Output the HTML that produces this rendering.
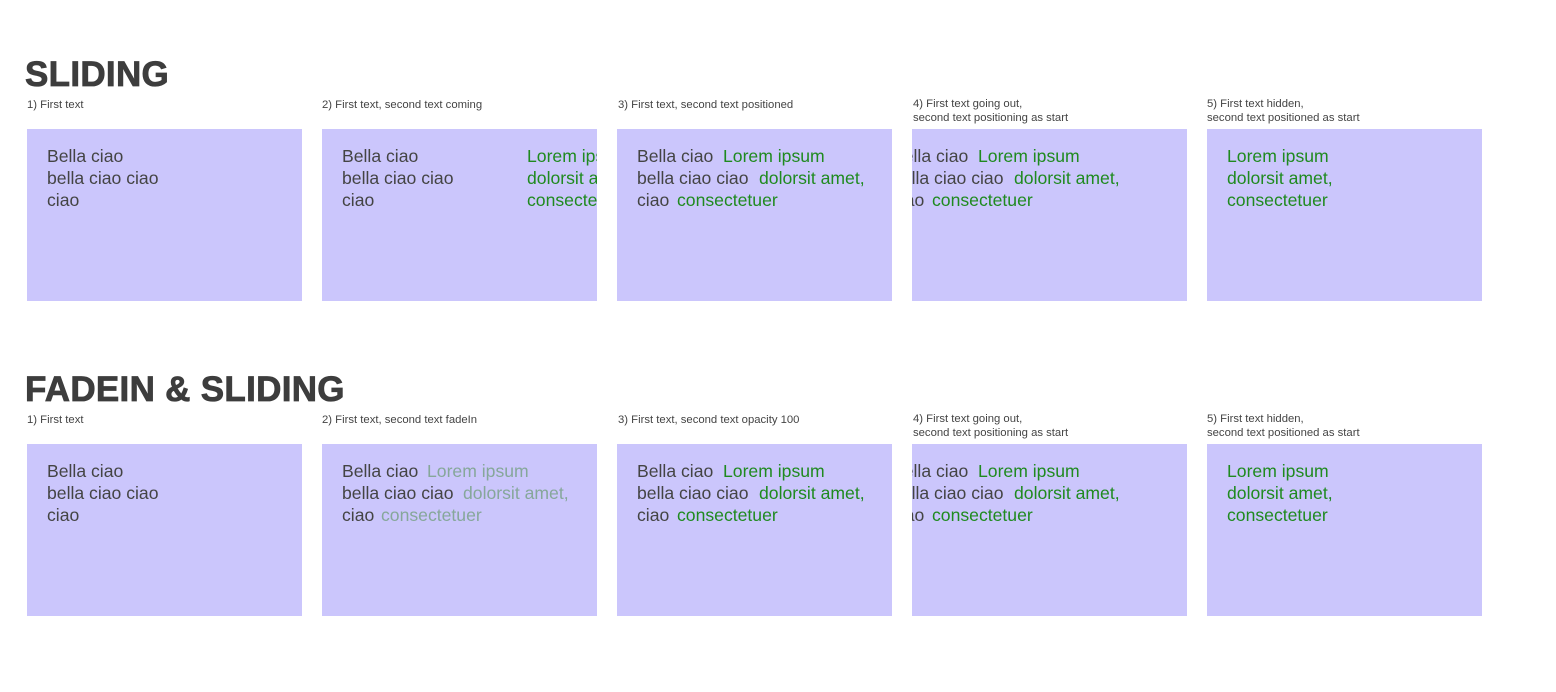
<!DOCTYPE html>
<html><head><meta charset="utf-8"><style>
body{margin:0;width:1556px;height:692px;background:#fff;position:relative;overflow:hidden;font-family:"Liberation Sans",sans-serif;color:#444}
h1{position:absolute;margin:0;font-size:35px;font-weight:bold;letter-spacing:0.3px;color:#3d3d3d;line-height:1;-webkit-text-stroke:0.8px #3d3d3d}
.lab{position:absolute;font-size:11.3px;line-height:14px;color:#444}
.box{position:absolute;width:275px;height:172px;background:#cbc6fc;overflow:hidden}
.t{position:absolute;font-size:17.6px;line-height:22px;white-space:nowrap;color:#444}
.g{color:#1f8a1f}
.f{color:#86a79a}
</style></head><body>
<h1 style="left:25px;top:57px">SLIDING</h1>
<h1 style="left:25px;top:372px">FADEIN &amp; SLIDING</h1>

<div class="lab" style="left:27px;top:98px">1) First text</div>
<div class="lab" style="left:322px;top:98px">2) First text, second text coming</div>
<div class="lab" style="left:618px;top:98px">3) First text, second text positioned</div>
<div class="lab" style="left:913px;top:97px">4) First text going out,<br>second text positioning as start</div>
<div class="lab" style="left:1207px;top:97px">5) First text hidden,<br>second text positioned as start</div>

<div class="lab" style="left:27px;top:413px">1) First text</div>
<div class="lab" style="left:322px;top:413px">2) First text, second text fadeIn</div>
<div class="lab" style="left:618px;top:413px">3) First text, second text opacity 100</div>
<div class="lab" style="left:913px;top:412px">4) First text going out,<br>second text positioning as start</div>
<div class="lab" style="left:1207px;top:412px">5) First text hidden,<br>second text positioned as start</div>

<div class="box" style="left:27px;top:129px">
<div class="t" style="left:20px;top:16px">Bella ciao</div>
<div class="t" style="left:20px;top:38px">bella ciao ciao</div>
<div class="t" style="left:20px;top:60px">ciao</div>
</div>
<div class="box" style="left:322px;top:129px">
<div class="t" style="left:20px;top:16px">Bella ciao</div>
<div class="t" style="left:20px;top:38px">bella ciao ciao</div>
<div class="t" style="left:20px;top:60px">ciao</div>
<div class="t g" style="left:205px;top:16px">Lorem ipsum</div>
<div class="t g" style="left:205px;top:38px">dolorsit amet,</div>
<div class="t g" style="left:205px;top:60px">consectetuer</div>
</div>
<div class="box" style="left:617px;top:129px">
<div class="t" style="left:20px;top:16px">Bella ciao</div>
<div class="t" style="left:20px;top:38px">bella ciao ciao</div>
<div class="t" style="left:20px;top:60px">ciao</div>
<div class="t g" style="left:106px;top:16px">Lorem ipsum</div>
<div class="t g" style="left:142px;top:38px">dolorsit amet,</div>
<div class="t g" style="left:60px;top:60px">consectetuer</div>
</div>
<div class="box" style="left:912px;top:129px">
<div class="t" style="left:-20px;top:16px">Bella ciao</div>
<div class="t" style="left:-20px;top:38px">bella ciao ciao</div>
<div class="t" style="left:-20px;top:60px">ciao</div>
<div class="t g" style="left:66px;top:16px">Lorem ipsum</div>
<div class="t g" style="left:102px;top:38px">dolorsit amet,</div>
<div class="t g" style="left:20px;top:60px">consectetuer</div>
</div>
<div class="box" style="left:1207px;top:129px">
<div class="t g" style="left:20px;top:16px">Lorem ipsum</div>
<div class="t g" style="left:20px;top:38px">dolorsit amet,</div>
<div class="t g" style="left:20px;top:60px">consectetuer</div>
</div>

<div class="box" style="left:27px;top:444px">
<div class="t" style="left:20px;top:16px">Bella ciao</div>
<div class="t" style="left:20px;top:38px">bella ciao ciao</div>
<div class="t" style="left:20px;top:60px">ciao</div>
</div>
<div class="box" style="left:322px;top:444px">
<div class="t" style="left:20px;top:16px">Bella ciao</div>
<div class="t" style="left:20px;top:38px">bella ciao ciao</div>
<div class="t" style="left:20px;top:60px">ciao</div>
<div class="t f" style="left:105px;top:16px">Lorem ipsum</div>
<div class="t f" style="left:141px;top:38px">dolorsit amet,</div>
<div class="t f" style="left:59px;top:60px">consectetuer</div>
</div>
<div class="box" style="left:617px;top:444px">
<div class="t" style="left:20px;top:16px">Bella ciao</div>
<div class="t" style="left:20px;top:38px">bella ciao ciao</div>
<div class="t" style="left:20px;top:60px">ciao</div>
<div class="t g" style="left:106px;top:16px">Lorem ipsum</div>
<div class="t g" style="left:142px;top:38px">dolorsit amet,</div>
<div class="t g" style="left:60px;top:60px">consectetuer</div>
</div>
<div class="box" style="left:912px;top:444px">
<div class="t" style="left:-20px;top:16px">Bella ciao</div>
<div class="t" style="left:-20px;top:38px">bella ciao ciao</div>
<div class="t" style="left:-20px;top:60px">ciao</div>
<div class="t g" style="left:66px;top:16px">Lorem ipsum</div>
<div class="t g" style="left:102px;top:38px">dolorsit amet,</div>
<div class="t g" style="left:20px;top:60px">consectetuer</div>
</div>
<div class="box" style="left:1207px;top:444px">
<div class="t g" style="left:20px;top:16px">Lorem ipsum</div>
<div class="t g" style="left:20px;top:38px">dolorsit amet,</div>
<div class="t g" style="left:20px;top:60px">consectetuer</div>
</div>
</body></html>
